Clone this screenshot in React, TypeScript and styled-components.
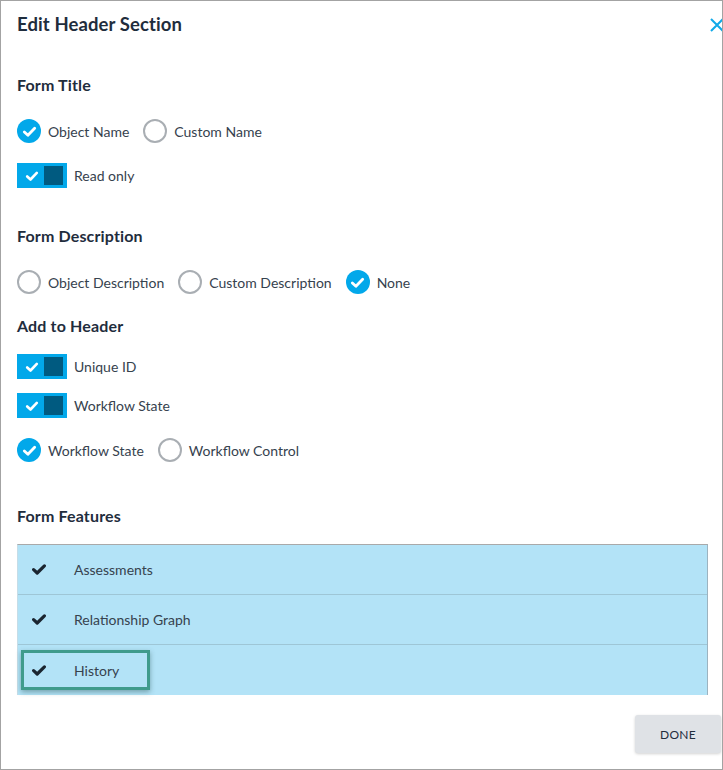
import React from "react";
import styled, { createGlobalStyle } from "styled-components";

const Global = createGlobalStyle`
  html, body { margin: 0; padding: 0; background: #fff; }
  body { font-family: Lato, "Open Sans", sans-serif; color: #2b3844; }
  * { box-sizing: border-box; }
`;

const Frame = styled.div`
  width: 723px;
  height: 770px;
  border: 1px solid #a3a3a3;
  background: #fff;
  display: flex;
  flex-direction: column;
  overflow: hidden;
  position: relative;
`;

const Header = styled.div`
  display: flex;
  align-items: center;
  justify-content: space-between;
  height: 45px;
  padding: 0 0 0 16px;
`;

const Title = styled.h1`
  margin: 0;
  font-size: 18.5px;
  font-weight: 700;
  color: #1f2d3d;
  letter-spacing: 0.1px;
`;

const Close = styled.button`
  border: none;
  background: none;
  padding: 0;
  margin-right: -4px;
  margin-top: 2px;
  width: 19px;
  height: 19px;
  display: flex;
  align-items: center;
  justify-content: center;
`;

const Body = styled.div`
  padding: 0 14px 0 16px;
  display: flex;
  flex-direction: column;
`;

const SectionTitle = styled.h2<{ $top: number; $bottom: number }>`
  margin: ${(p) => p.$top}px 0 ${(p) => p.$bottom}px;
  font-size: 16px;
  font-weight: 700;
  color: #1f2d3d;
  line-height: 20px;
  letter-spacing: 0.15px;
`;

const Row = styled.div<{ $mb: number }>`
  display: flex;
  align-items: center;
  margin-bottom: ${(p) => p.$mb}px;
`;

const RadioItem = styled.label`
  display: flex;
  align-items: center;
  gap: 7px;
  margin-right: 14px;
  font-size: 14px;
  color: #36424e;
  height: 24px;
`;

const Circle = styled.span<{ $on: boolean }>`
  width: 24px;
  height: 24px;
  border-radius: 50%;
  flex: none;
  display: flex;
  align-items: center;
  justify-content: center;
  background: ${(p) => (p.$on ? "#02a8ea" : "#fff")};
  border: ${(p) => (p.$on ? "none" : "2px solid #a9aeb3")};
`;

const ToggleItem = styled.label`
  display: flex;
  align-items: center;
  gap: 7px;
  font-size: 14px;
  color: #36424e;
`;

const Toggle = styled.span`
  width: 50px;
  height: 25px;
  background: #02a8ea;
  display: flex;
  align-items: center;
  padding: 0 4px 0 8px;
  justify-content: space-between;
`;

const Knob = styled.span`
  width: 19px;
  height: 19px;
  background: #005a80;
`;

const Table = styled.div`
  border-top: 1px solid #a9a9a9;
  border-right: 1px solid #9cb3c0;
  border-left: 1px solid #c5dde8;
  background: #b3e3f7;
  width: 691px;
`;

const FeatureRow = styled.div<{ $last?: boolean }>`
  height: 50px;
  display: flex;
  align-items: center;
  border-bottom: ${(p) => (p.$last ? "none" : "1px solid #9ec6d6")};
  position: relative;
`;

const CheckCell = styled.span`
  width: 56px;
  padding-left: 14px;
  display: flex;
  align-items: center;
`;

const FeatureLabel = styled.span`
  font-size: 14px;
  color: #36424e;
`;

const Highlight = styled.span`
  position: absolute;
  left: 3px;
  top: 5px;
  width: 129px;
  height: 40px;
  border: 3px solid #3f9b8c;
  box-shadow: 0 2px 5px rgba(40, 80, 80, 0.45);
  pointer-events: none;
`;

const Footer = styled.div`
  display: flex;
  justify-content: flex-end;
  padding-top: 20px;
  margin-right: -13px;
`;

const Done = styled.button`
  width: 86px;
  height: 38px;
  border: none;
  border-radius: 3px;
  background: #dfe2e6;
  box-shadow: 0 1px 3px rgba(0, 0, 0, 0.18);
  font-family: Lato, "Open Sans", sans-serif;
  font-size: 12px;
  color: #1f2d3d;
  letter-spacing: 0.3px;
`;

const WhiteCheck = ({ size = 13 }: { size?: number }) => (
  <svg width={size} height={size} viewBox="0 0 16 16">
    <path d="M2.5 8.5 L6.3 12 L13.5 4.5" fill="none" stroke="#fff" strokeWidth="3" strokeLinecap="round" strokeLinejoin="round" />
  </svg>
);

const DarkCheck = () => (
  <svg width="14" height="11" viewBox="0 0 14 11">
    <path d="M1.6 5.6 L5.2 9 L12.4 1.9" fill="none" stroke="#1a2530" strokeWidth="3.2" strokeLinecap="round" strokeLinejoin="round" />
  </svg>
);

const Radio = ({ on, label }: { on: boolean; label: string }) => (
  <RadioItem>
    <Circle $on={on}>{on && <WhiteCheck size={15} />}</Circle>
    {label}
  </RadioItem>
);

const Switch = ({ label }: { label: string }) => (
  <ToggleItem>
    <Toggle>
      <WhiteCheck size={14} />
      <Knob />
    </Toggle>
    {label}
  </ToggleItem>
);

export default function App() {
  return (
    <>
      <Global />
      <Frame>
        <Header>
          <Title>Edit Header Section</Title>
          <Close aria-label="close">
            <svg width="14" height="14" viewBox="0 0 14 14">
              <path d="M1 1 L13 13 M13 1 L1 13" stroke="#10a9e8" strokeWidth="2" />
            </svg>
          </Close>
        </Header>
        <Body>
          <SectionTitle $top={29} $bottom={24}>Form Title</SectionTitle>
          <Row $mb={20}>
            <Radio on label="Object Name" />
            <Radio on={false} label="Custom Name" />
          </Row>
          <Row $mb={0}>
            <Switch label="Read only" />
          </Row>
          <SectionTitle $top={38} $bottom={24}>Form Description</SectionTitle>
          <Row $mb={22}>
            <Radio on={false} label="Object Description" />
            <Radio on={false} label="Custom Description" />
            <Radio on label="None" />
          </Row>
          <SectionTitle $top={0} $bottom={18}>Add to Header</SectionTitle>
          <Row $mb={14}>
            <Switch label="Unique ID" />
          </Row>
          <Row $mb={20}>
            <Switch label="Workflow State" />
          </Row>
          <Row $mb={0}>
            <Radio on label="Workflow State" />
            <Radio on={false} label="Workflow Control" />
          </Row>
          <SectionTitle $top={44} $bottom={18}>Form Features</SectionTitle>
          <Table>
            <FeatureRow>
              <CheckCell><DarkCheck /></CheckCell>
              <FeatureLabel>Assessments</FeatureLabel>
            </FeatureRow>
            <FeatureRow>
              <CheckCell><DarkCheck /></CheckCell>
              <FeatureLabel>Relationship Graph</FeatureLabel>
            </FeatureRow>
            <FeatureRow $last>
              <CheckCell><DarkCheck /></CheckCell>
              <FeatureLabel>History</FeatureLabel>
              <Highlight />
            </FeatureRow>
          </Table>
          <Footer>
            <Done>DONE</Done>
          </Footer>
        </Body>
      </Frame>
    </>
  );
}
